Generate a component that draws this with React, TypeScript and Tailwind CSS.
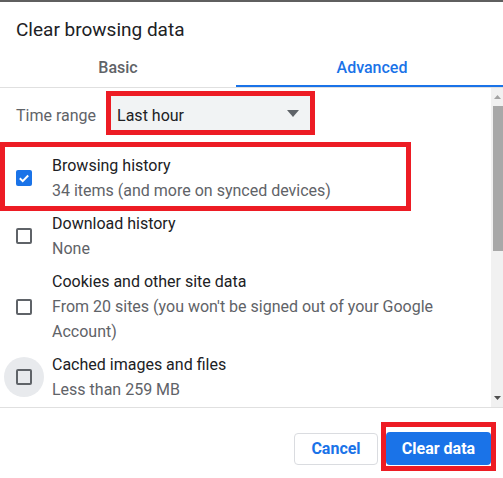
import React from 'react';

type Item = {
  title: string;
  lines: string[];
  checked?: boolean;
  focused?: boolean;
  marked?: boolean;
};

const items: Item[] = [
  { title: 'Browsing history', lines: ['34 items (and more on synced devices)'], checked: true, marked: true },
  { title: 'Download history', lines: ['None'] },
  {
    title: 'Cookies and other site data',
    lines: ["From 20 sites (you won't be signed out of your Google", 'Account)'],
  },
  { title: 'Cached images and files', lines: ['Less than 259 MB'], focused: true },
];

const Checkbox = ({ checked }: { checked?: boolean }) =>
  checked ? (
    <div className="w-4 h-4 rounded-[2px] bg-[#1a73e8] flex items-center justify-center">
      <svg width="16" height="16" viewBox="0 0 16 16">
        <path d="M3.8 8.3l2.9 2.8 5.5-5.6" fill="none" stroke="#fff" strokeWidth="2" />
      </svg>
    </div>
  ) : (
    <div className="w-4 h-4 rounded-[2px] border-2 border-[#5f6368]" />
  );

const Row = ({ item }: { item: Item }) => (
  <div className="relative flex items-center py-[4px]">
    <div
      className={`ml-1 w-10 h-10 rounded-full flex items-center justify-center ${
        item.focused ? 'bg-[#e8eaed]' : ''
      }`}
    >
      <Checkbox checked={item.checked} />
    </div>
    <div className="ml-2 leading-[25px] text-[16px]">
      <div className="text-[#202124]">{item.title}</div>
      {item.lines.map((l) => (
        <div key={l} className="text-[#5f6368]">
          {l}
        </div>
      ))}
    </div>
    {item.marked && (
      <div className="absolute -top-[7px] -bottom-[4px] left-0 w-[411px] border-[5px] border-[#ed1c24] pointer-events-none" />
    )}
  </div>
);

export default function App() {
  return (
    <div className="w-[503px] h-[478px] overflow-hidden bg-white border-t-2 border-[#5f5f5f] font-['Roboto',sans-serif] flex flex-col">
      {/* Title */}
      <div className="pt-4 pl-4 text-[19px] leading-[24px] text-[#202124]">Clear browsing data</div>

      {/* Tabs */}
      <div className="flex border-b border-[#e0e0e0]">
        <div className="w-[236px] shrink-0 h-[45px] pt-4 text-center text-[16px] leading-[20px] font-medium text-[#5f6368]">
          Basic
        </div>
        <div className="w-[272px] shrink-0 h-[45px] pt-4 text-center text-[16px] leading-[20px] font-medium text-[#1a73e8] border-b-2 border-[#1a73e8]">
          Advanced
        </div>
      </div>

      {/* Content */}
      <div className="flex h-[320px] border-b border-[#e0e0e0]">
        <div className="flex-1 overflow-hidden">
          <div className="flex items-center pl-4 pt-[3px] pb-[14px]">
            <span className="text-[16px] text-[#5f6368] mr-[10px] pt-[5px]">Time range</span>
            <div className="border-[5px] border-[#ed1c24]">
              <div className="w-[199px] h-[34px] bg-[#f1f3f4] flex items-center justify-between pl-[6px] pr-[11px]">
                <span className="text-[16px] text-[#202124] pt-[5px]">Last hour</span>
                <svg width="12" height="7" viewBox="0 0 12 7">
                  <path d="M0 0h12L6 7z" fill="#5f6368" />
                </svg>
              </div>
            </div>
          </div>
          {items.map((it) => (
            <Row key={it.title} item={it} />
          ))}
        </div>

        {/* Scrollbar */}
        <div className="w-[12px] bg-[#f1f1f1] flex flex-col items-end">
          <div className="h-[18px] w-full flex items-center justify-center">
            <svg width="7" height="4" viewBox="0 0 7 4">
              <path d="M0 4h7L3.5 0z" fill="#a3a3a3" />
            </svg>
          </div>
          <div className="w-[10px] h-[145px] bg-[#a8a8a8]" />
          <div className="flex-1" />
          <div className="h-[18px] w-full flex items-center justify-center">
            <svg width="7" height="4" viewBox="0 0 7 4">
              <path d="M0 0h7L3.5 4z" fill="#505050" />
            </svg>
          </div>
        </div>
      </div>

      {/* Footer */}
      <div className="flex justify-end items-end gap-2 pt-[24px] pr-3">
        <button className="w-[84px] h-[32px] rounded-[4px] border border-[#dadce0] bg-white text-[#1a73e8] text-[16px] font-bold">
          Cancel
        </button>
        <div className="relative">
          <button className="w-[105px] h-[33px] rounded-[4px] bg-[#1a73e8] text-white text-[16px] font-bold">
            Clear data
          </button>
          <div className="absolute -top-[10px] -bottom-[6px] -left-[5px] -right-[5px] border-[5px] border-[#ed1c24] pointer-events-none" />
        </div>
      </div>
    </div>
  );
}
